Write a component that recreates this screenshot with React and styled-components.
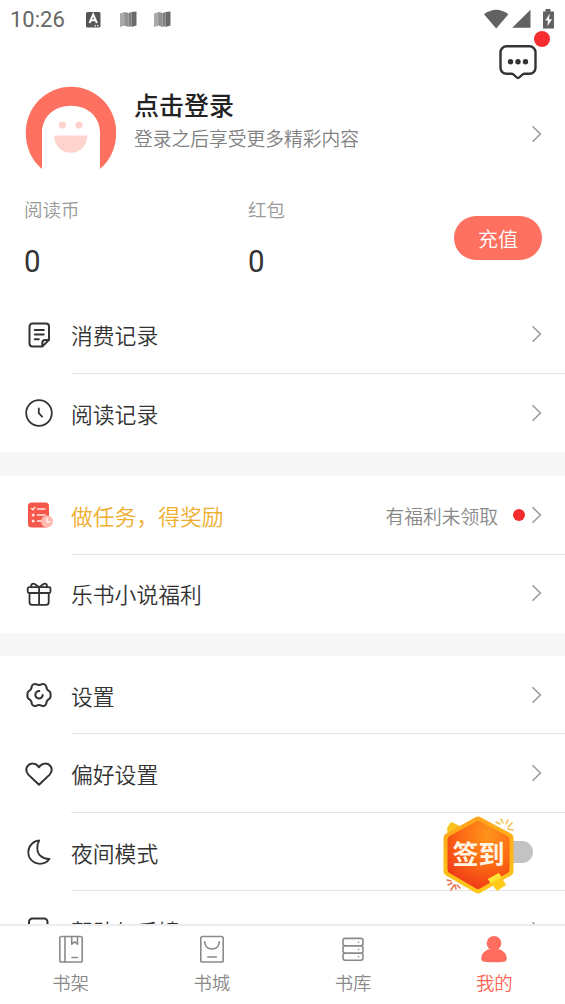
import React from "react";
import styled, { createGlobalStyle } from "styled-components";

const GlobalStyle = createGlobalStyle`
    * {
        box-sizing: border-box;
    }

    body {
        margin: 0;
        background-color: #fff;
        font-family: Roboto, "Noto Sans CJK SC", sans-serif;
        font-weight: 350;
        color: #333;
    }
`;

const Screen = styled.div`
    width: 565px;
    height: 1004px;
    display: flex;
    flex-direction: column;
    overflow: hidden;
    background-color: #fff;
`;

const StatusBar = styled.div`
    height: 31px;
    flex: none;
    display: flex;
    align-items: center;
    padding: 7px 9px 0 10px;
    color: #666;
`;

const Clock = styled.span`
    width: 75px;
    font-size: 22px;
    font-weight: 400;
    line-height: 24px;
    padding-top: 1px;
`;

const StatusRight = styled.div`
    margin-left: auto;
    display: flex;
`;

const Content = styled.div`
    flex: 1;
    min-height: 0;
    overflow: hidden;
`;

const MessageBar = styled.div`
    height: 55px;
    display: flex;
    justify-content: flex-end;
    padding: 13px 28px 0 0;
`;

const MessageButton = styled.div`
    position: relative;
    width: 38px;
    height: 36px;
`;

const MessageDot = styled.span`
    position: absolute;
    top: -13px;
    right: -13px;
    width: 16px;
    height: 16px;
    border-radius: 50%;
    background-color: #f62d30;
`;

const Profile = styled.div`
    height: 95px;
    display: flex;
    align-items: center;
    padding: 0 23px 0 25px;
`;

const ProfileText = styled.div`
    flex: 1;
    margin-left: 17px;
    padding-bottom: 22px;
`;

const ProfileName = styled.div`
    font-size: 25px;
    font-weight: 500;
    line-height: 34px;
    color: #222;
`;

const ProfileHint = styled.div`
    font-size: 18.75px;
    line-height: 31px;
    padding-top: 1px;
    margin-bottom: -1px;
    color: #808080;
`;

const Wallet = styled.div`
    height: 114.5px;
    display: grid;
    grid-template-columns: 224px 1fr 88px;
    align-items: start;
    padding: 16px 23px 0 24px;
`;

const Balance = styled.div`
    min-width: 0;
`;

const BalanceLabel = styled.div`
    font-size: 18.5px;
    line-height: 28px;
    color: #999;
`;

const BalanceValue = styled.div`
    font-size: 32px;
    font-weight: 400;
    line-height: 36px;
    margin-top: 18px;
    color: #333;
    transform: scaleX(0.92);
    transform-origin: left;
`;

const RechargeButton = styled.button`
    height: 44px;
    margin-top: 19px;
    padding: 0;
    border: none;
    border-radius: 22px;
    background-color: #fe7160;
    color: #fff;
    font-family: inherit;
    font-weight: inherit;
    font-size: 20px;
`;

const Group = styled.div`
    & + & {
        border-top: 24px solid #f7f7f7;
    }

    /* the rows of the last group sit a little tighter to the band above */
    & + & + & {
        border-top-width: 23px;
    }
`;

const Row = styled.div`
    height: 78.4px;
    display: flex;
    align-items: center;
    padding-left: 25px;
`;

const RowIcon = styled.div`
    width: 28px;
    height: 28px;
    margin-right: 18px;
    color: #333;

    svg {
        display: block;
    }
`;

const RowBody = styled.div`
    flex: 1;
    height: 100%;
    display: flex;
    align-items: center;
    padding-right: 23px;
    border-bottom: 1px solid #e4e4e4;

    ${Row}:last-child & {
        border-bottom-color: transparent;
    }
`;

const RowLabel = styled.span`
    flex: 1;
    font-size: 21.8px;
    padding-top: 1px;
    color: ${({ $highlight }) => ($highlight ? "#efad2e" : "#333")};
`;

const RowNote = styled.span`
    font-size: 18.75px;
    padding-top: 1px;
    color: #888;
`;

const RedDot = styled.span`
    width: 12px;
    height: 12px;
    margin: 0 6px 0 15px;
    border-radius: 50%;
    background-color: #f62d30;
`;

const SwitchWrap = styled.div`
    position: relative;
    margin-right: 9px;
`;

const Switch = styled.div`
    width: 46px;
    height: 22px;
    border-radius: 11px;
    background-color: #c3c3c3;
`;

const SignIn = styled.div`
    position: absolute;
    right: 17.5px;
    top: -27px;
    width: 74px;
    height: 82px;
    display: flex;
    align-items: center;
    justify-content: center;

    svg {
        position: absolute;
        inset: 0;
    }
`;

const SignInText = styled.span`
    position: relative;
    font-size: 26px;
    font-weight: 700;
    line-height: 30px;
    white-space: nowrap;
    color: #fff3e2;
`;

const TabBar = styled.div`
    height: 80px;
    flex: none;
    display: flex;
    border-top: 2px solid #ededed;
    background-color: #fff;
`;

const Tab = styled.div`
    flex: 1;
    display: flex;
    flex-direction: column;
    align-items: center;
    padding-top: 9px;
    font-size: 18.4px;
    line-height: 28px;
    color: ${({ $active }) => ($active ? "#fd6454" : "#8a8a8a")};

    svg {
        display: block;
        margin-bottom: 7px;
    }
`;

const Line = ({ size = 28, width = 1.8, children }) => (
    <svg
        width={size}
        height={size}
        viewBox={`0 0 ${size} ${size}`}
        fill="none"
        stroke="currentColor"
        strokeWidth={width}
        strokeLinecap="round"
        strokeLinejoin="round"
    >
        {children}
    </svg>
);

const Chevron = () => (
    <svg width="11" height="18" viewBox="0 0 11 18" fill="none" stroke="#999" strokeWidth="1.5">
        <path d="M1.500 1.300 9.400 9l-7.900 7.700" />
    </svg>
);

const NoteIcon = () => (
    <Line width={2}>
        <path d="M17.300 25.500H7.500a3 3 0 0 1-3-3v-17a3 3 0 0 1 3-3H21a3 3 0 0 1 3 3v13.400l-6.700 6.600v-3.800a2.800 2.800 0 0 1 2.800-2.800H24" />
        <path d="M9.800 9h9M9.800 13.600h9M9.800 18.200h4" />
    </Line>
);

const ClockIcon = () => (
    <Line>
        <circle cx="14" cy="14" r="12.800" />
        <path d="M13.800 9.500v4.700l3.300 3.400" />
    </Line>
);

const TaskIcon = () => (
    <svg width="28" height="28" viewBox="0 0 28 28" fill="none">
        <rect x="3" y="1.500" width="21" height="25" rx="3.500" fill="#f6584b" />
        <g stroke="#ffe5de" strokeWidth="1.600" strokeLinecap="round">
            <path d="M12.500 8h7.500M12.500 14h7.500M12.500 20h4" />
            <path d="m6.600 7.500 1.200 1.200 2-2.200" />
        </g>
        <circle cx="8.200" cy="14" r="1.500" fill="#ffe5de" />
        <circle cx="8.200" cy="20" r="1.500" fill="#ffe5de" />
        <circle cx="22" cy="20.500" r="6" fill="#ffb8ae" />
        <path d="M22 17.500v3.400h3" stroke="#fff0ed" strokeWidth="1.500" strokeLinecap="round" />
    </svg>
);

const GiftIcon = () => (
    <Line>
        <rect x="2.700" y="7.200" width="22.800" height="5.800" rx="1.500" />
        <path d="M4.500 13v9.200a2.600 2.600 0 0 0 2.600 2.600h14a2.600 2.600 0 0 0 2.600-2.600V13M14.100 7.200v17.600" />
        <path d="M14.100 7.200 10 4.200C7.500 2.500 5.300 5 6.500 7.200M14.100 7.200l4.100-3c2.500-1.700 4.700.8 3.500 3" />
    </Line>
);

const GearIcon = () => (
    <Line width={2}>
        <path d="M10.900 3.200c2 1.100 4.200 1.100 6.200 0 1.300-.7 3.900.6 4.100 2.200.2 2.400 1 3.700 3 4.700 1.900.9 1.900 6.900 0 7.800-2 1-2.800 2.300-3 4.700-.2 1.600-2.800 2.900-4.100 2.200-2-1.100-4.200-1.100-6.200 0-1.300.7-3.900-.6-4.100-2.200-.2-2.400-1-3.700-3-4.700-1.900-.9-1.900-6.900 0-7.800 2-1 2.800-2.300 3-4.700.2-1.600 2.800-2.900 4.100-2.200z" />
        <path d="M14.300 10.100a3.700 3.700 0 1 0 3.400 3.800" />
    </Line>
);

const HeartIcon = () => (
    <Line width={2}>
        <path d="M14 24.800 3.300 14.600C-1.400 9 3.200 3 8.200 3.500c2.600.2 4.500 1.700 5.800 3.700 1.300-2 3.200-3.500 5.800-3.700 5-.5 9.600 5.500 4.900 11.100z" />
    </Line>
);

const MoonIcon = () => (
    <Line>
        <path d="M14.200 2.400C7.800 3.200 3.300 8.100 3.300 14.200c0 6.600 5.200 11.600 11.600 11.600 4.200 0 7.700-2 9.700-5-7.400.4-12.300-4.400-12.300-10.600 0-3.100.6-5.800 1.900-7.800z" />
    </Line>
);

const FeedbackIcon = () => (
    <Line width={2}>
        <path d="M22.500 24V6A3.500 3.500 0 0 0 19 2.500H7.500A3.500 3.500 0 0 0 4 6v16a3.500 3.500 0 0 0 3.500 3.500H22" />
        <path d="M9.500 10h9M9.500 15h9" />
    </Line>
);

const ShelfIcon = () => (
    <Line width={1.6}>
        <rect x="2.800" y="1.500" width="22.400" height="25.500" rx="1.800" />
        <path d="M8 1.500V27M14.700 1.500v7.700l2.900-2.400 2.900 2.400V1.500M15 22.500h5.500" />
    </Line>
);

const StoreIcon = () => (
    <Line width={1.6}>
        <rect x="2.800" y="1.500" width="22.400" height="25.500" rx="1.800" />
        <path d="M6.700 6.800c.4 4.500 3.300 7.200 7.300 7.200s6.900-2.700 7.300-7.200M9.800 22h8.600" />
    </Line>
);

const LibraryIcon = () => (
    <Line width={1.6}>
        <rect x="4" y="3.400" width="20" height="7.400" rx="2.200" />
        <rect x="4" y="10.800" width="20" height="7.400" rx="2.200" />
        <rect x="4" y="18.200" width="20" height="7" rx="2.200" />
        <path d="M19.500 7.200h.1M19.500 14.500h.1M19.500 21.700h.1" />
    </Line>
);

const UserIcon = () => (
    <svg width="28" height="28" viewBox="0 0 28 28" fill="#fe6d5d">
        <circle cx="14" cy="8.200" r="7.300" />
        <path d="M9 14.200h10c4.700 1.400 7.700 5 7.700 9.200 0 2-1 3.100-3.100 3.400-6.400.7-12.800.7-19.200 0-2.100-.3-3.100-1.400-3.100-3.400 0-4.200 3-7.800 7.700-9.200z" />
    </svg>
);

const AvatarSvg = styled.svg`
    margin-top: -9px;
`;

const Avatar = () => (
    <AvatarSvg width="92" height="92" viewBox="0 0 92 92">
        <path
            fill="#fe7160"
            d="M17 86C6.500 77.500.8 64 .8 49.500a45.200 45.800 0 0 1 90.400 0C91.200 64 85.500 77.500 75 86V50C75 34 63 22.800 46 22.800S17 34 17 50z"
        />
        <circle cx="37.300" cy="42" r="3.600" fill="#ffd3cd" />
        <circle cx="54" cy="42" r="3.600" fill="#ffd3cd" />
        <path d="M29.300 52.500h33c0 10.500-7 17.300-16.500 17.300s-16.500-6.800-16.500-17.300z" fill="#ffd3cd" />
    </AvatarSvg>
);

const StatusIcon = styled.svg`
    flex: none;
    margin-right: ${({ $gap }) => $gap}px;
`;

const MapIcon = () => (
    <StatusIcon $gap={17} width="17" height="17" viewBox="0 0 17 17">
        <path d="M0 2.500 5 1v13.500L0 16z" fill="#aaa" />
        <path d="m4.500 1 4 1v14l-4-1.500z" fill="#929292" />
        <path d="m8.500 2 3-1v14l-3 1z" fill="#808080" />
        <path d="m11.500 1 5-.5v14l-5 1.500z" fill="#6b6b6b" />
    </StatusIcon>
);

const InputIcon = () => (
    <StatusIcon $gap={19} width="16" height="17" viewBox="0 0 16 17">
        <rect x="1" y="1" width="14.500" height="15.500" rx="1.500" fill="#555" />
        <path d="m4.500 12 3.700-8.500 3.700 8.500M5.800 9.300h4.800" fill="none" stroke="#fff" strokeWidth="1.900" />
        <path d="M9.500 14.700h5" stroke="#ddd" strokeWidth="1.500" strokeDasharray="1.500 1" />
    </StatusIcon>
);

const SystemIcons = () => (
    <svg width="73" height="20" viewBox="0 0 73 20" fill="#626262">
        <path d="M1 5.200Q13.200-3.800 25.400 5.200L13.200 19.500z" />
        <path d="M47.500.8v18H29.200z" />
        <path d="M62.500 0h5v2.500H71v17H60v-17h2.500z" />
        <path d="M66.800 4.500 62.300 11.500h2.800l-.8 5.700 4.700-7h-3z" fill="#fff" />
    </svg>
);

const MessageIcon = () => (
    <svg width="38" height="36" viewBox="0 0 38 36" fill="none">
        <path
            d="M7.500 2.300h23a6 6 0 0 1 6 6v15.500a6 6 0 0 1-6 6h-5.500c-2 0-4.200 4.200-6 4.200s-4-4.200-6-4.200H7.500a6 6 0 0 1-6-6V8.300a6 6 0 0 1 6-6z"
            stroke="#333"
            strokeWidth="2.400"
            strokeLinejoin="round"
        />
        <g fill="#333">
            <circle cx="11.500" cy="17.700" r="2.700" />
            <circle cx="19" cy="17.700" r="2.700" />
            <circle cx="26.500" cy="17.700" r="2.700" />
        </g>
    </svg>
);

const SignInBadge = () => (
    <svg width="74" height="82" viewBox="0 0 74 82">
        <defs>
            <linearGradient id="rim" x1="0" y1="0" x2="0" y2="1">
                <stop offset="0" stopColor="#ffa51b" />
                <stop offset="1" stopColor="#ffc818" />
            </linearGradient>
            <radialGradient id="core" cx="0.65" cy="0.2" r="0.9">
                <stop offset="0" stopColor="#ff951b" />
                <stop offset="0.55" stopColor="#fb6514" />
                <stop offset="1" stopColor="#ee3219" />
            </radialGradient>
        </defs>
        <path d="m5 14 4-6 5 2 7 4-8 9-7-1z" fill="#f8c41c" />
        <path
            d="M33.500 3.200a5 5 0 0 1 5 0L69 19.500a5 5 0 0 1 2.500 4.500v33a5 5 0 0 1-2.500 4.500L38.500 78.800a5 5 0 0 1-5 0L4 61.500A5 5 0 0 1 1.500 57V24A5 5 0 0 1 4 19.500z"
            fill="url(#rim)"
        />
        <path
            d="M34 7.500a4 4 0 0 1 4 0L65.500 22a4 4 0 0 1 2 3.500v30a4 4 0 0 1-2 3.500L38 74.500a4 4 0 0 1-4 0L7.500 59a4 4 0 0 1-2-3.500v-30a4 4 0 0 1 2-3.500z"
            fill="url(#core)"
        />
        <path d="m46 65 11-6 7 12-9 6z" fill="#ffca18" />
        <path d="m46 65 11-6 2.500 4.500-11 6z" fill="#ffe435" />
        <g stroke="#f1bd4a" strokeWidth="1.500" strokeLinecap="round">
            <path d="m54 8 4 2M59 5l2 4M66 6l-2 4M70 9l-4 4M66 15l5 1" />
        </g>
        <g stroke="#e87152" strokeWidth="1.500" strokeLinecap="round">
            <path d="m5 66 4 1M6 71l4-2M9 76l3-5M14 75l-1-4M18 74l-3-3" />
        </g>
    </svg>
);

const MenuRow = ({ icon, label, highlight, note, children }) => (
    <Row>
        <RowIcon>{icon}</RowIcon>
        <RowBody>
            <RowLabel $highlight={highlight}>{label}</RowLabel>
            {note && (
                <>
                    <RowNote>{note}</RowNote>
                    <RedDot />
                </>
            )}
            {children || <Chevron />}
        </RowBody>
    </Row>
);

const App = () => {
    return (
        <>
            <GlobalStyle />
            <Screen>
                <StatusBar>
                    <Clock>10:26</Clock>
                    <InputIcon />
                    <MapIcon />
                    <MapIcon />
                    <StatusRight>
                        <SystemIcons />
                    </StatusRight>
                </StatusBar>
                <Content>
                    <MessageBar>
                        <MessageButton>
                            <MessageIcon />
                            <MessageDot />
                        </MessageButton>
                    </MessageBar>
                    <Profile>
                        <Avatar />
                        <ProfileText>
                            <ProfileName>点击登录</ProfileName>
                            <ProfileHint>登录之后享受更多精彩内容</ProfileHint>
                        </ProfileText>
                        <Chevron />
                    </Profile>
                    <Wallet>
                        <Balance>
                            <BalanceLabel>阅读币</BalanceLabel>
                            <BalanceValue>0</BalanceValue>
                        </Balance>
                        <Balance>
                            <BalanceLabel>红包</BalanceLabel>
                            <BalanceValue>0</BalanceValue>
                        </Balance>
                        <RechargeButton>充值</RechargeButton>
                    </Wallet>
                    <Group>
                        <MenuRow icon={<NoteIcon />} label="消费记录" />
                        <MenuRow icon={<ClockIcon />} label="阅读记录" />
                    </Group>
                    <Group>
                        <MenuRow icon={<TaskIcon />} label="做任务，得奖励" highlight note="有福利未领取" />
                        <MenuRow icon={<GiftIcon />} label="乐书小说福利" />
                    </Group>
                    <Group>
                        <MenuRow icon={<GearIcon />} label="设置" />
                        <MenuRow icon={<HeartIcon />} label="偏好设置" />
                        <MenuRow icon={<MoonIcon />} label="夜间模式">
                            <SwitchWrap>
                                <Switch />
                                <SignIn>
                                    <SignInBadge />
                                    <SignInText>签到</SignInText>
                                </SignIn>
                            </SwitchWrap>
                        </MenuRow>
                        <MenuRow icon={<FeedbackIcon />} label="帮助与反馈" />
                    </Group>
                </Content>
                <TabBar>
                    <Tab>
                        <ShelfIcon />
                        书架
                    </Tab>
                    <Tab>
                        <StoreIcon />
                        书城
                    </Tab>
                    <Tab>
                        <LibraryIcon />
                        书库
                    </Tab>
                    <Tab $active>
                        <UserIcon />
                        我的
                    </Tab>
                </TabBar>
            </Screen>
        </>
    );
};

export default App;
